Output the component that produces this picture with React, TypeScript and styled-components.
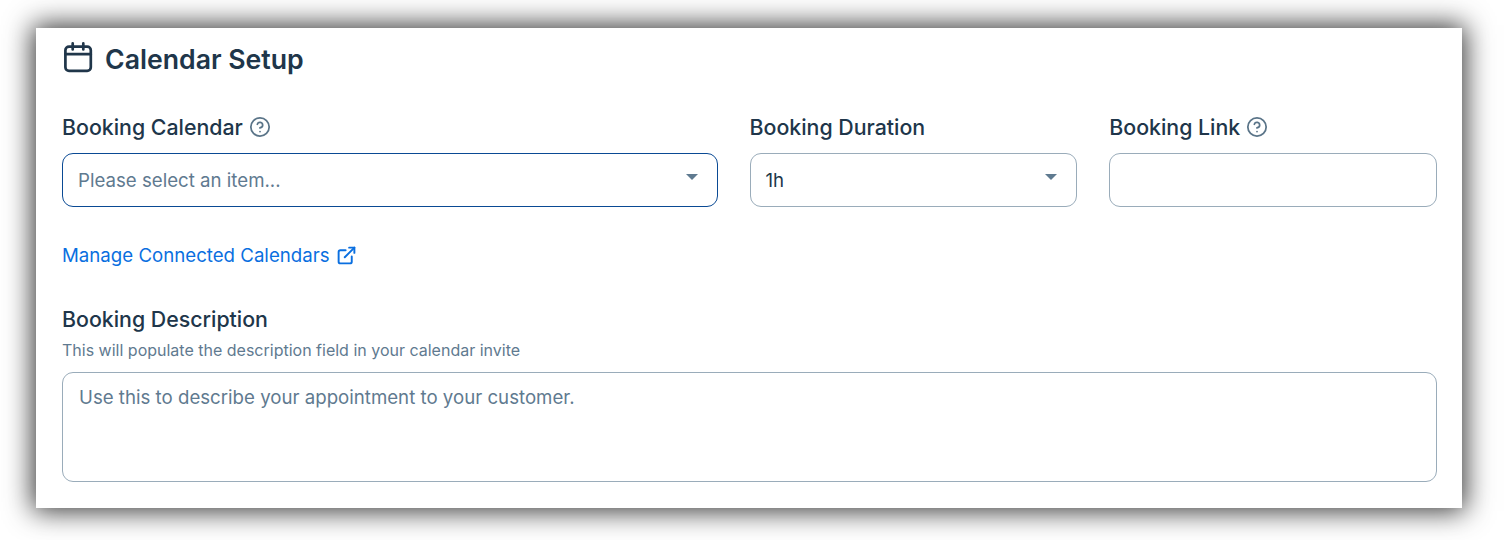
import React from "react";
import styled, { createGlobalStyle } from "styled-components";
import { CircleHelp, ExternalLink } from "lucide-react";

const GlobalStyle = createGlobalStyle`
  html, body {
    margin: 0;
    padding: 0;
    background: #fff;
    font-family: Inter, "Liberation Sans", sans-serif;
  }
`;

const Page = styled.div`
  width: 1512px;
  height: 540px;
  padding: 28px 50px 32px 36px;
  box-sizing: border-box;
  overflow: hidden;
`;

const Card = styled.section`
  height: 480px;
  box-sizing: border-box;
  padding: 13px 25px 0 26px;
  background: #fff;
  box-shadow: 0 0 26px 3px rgba(0, 0, 0, 0.8);
`;

const Header = styled.header`
  display: flex;
  align-items: center;
  gap: 11px;
  height: 38px;
  color: #20364a;
`;

const CalendarIcon = styled.svg`
  flex: none;
  width: 32px;
  height: 32px;
  margin-bottom: 4px;
`;

const Title = styled.h2`
  margin: 0 0 2px;
  font-size: 26.67px;
  line-height: 38px;
  font-weight: 600;
`;

const FieldGrid = styled.div`
  display: grid;
  grid-template-columns: 2fr 1fr 1fr;
  column-gap: 32px;
  margin-top: 35px;
`;

const Field = styled.div`
  display: flex;
  flex-direction: column;
`;

const Label = styled.label`
  display: flex;
  align-items: center;
  gap: 6px;
  height: 28px;
  margin-top: -1px;
  margin-bottom: 12px;
  font-size: 21.33px;
  line-height: 28px;
  font-weight: 500;
  color: #20364a;
`;

const HelpIcon = styled(CircleHelp)`
  color: #5a7488;
`;

const SelectBox = styled.div<{ $focused?: boolean }>`
  display: flex;
  align-items: center;
  justify-content: space-between;
  height: 54px;
  box-sizing: border-box;
  padding: 0 19px 0 15px;
  border: 1px solid ${(p) => (p.$focused ? "#0a4a94" : "#9aacba")};
  border-radius: 11px;
  font-size: 18.67px;
  color: #20364a;
`;

const Placeholder = styled.span`
  color: #5f7a90;
`;

const Caret = styled.span`
  width: 0;
  height: 0;
  margin-bottom: 6px;
  border-left: 6px solid transparent;
  border-right: 6px solid transparent;
  border-top: 6px solid #5f7a90;
`;

const TextInput = styled.input`
  height: 54px;
  width: 100%;
  box-sizing: border-box;
  padding: 0 15px;
  border: 1px solid #9aacba;
  border-radius: 11px;
  outline: none;
  font: inherit;
  font-size: 18.67px;
  background: #fff;
`;

const ManageLink = styled.a`
  display: inline-flex;
  align-items: center;
  gap: 6px;
  margin-top: 35px;
  height: 26px;
  font-size: 18.67px;
  color: #0a6fe0;
  text-decoration: none;
`;

const Description = styled.div`
  margin-top: 38px;
`;

const DescriptionLabel = styled(Label)`
  margin-bottom: 6px;
`;

const Hint = styled.div`
  font-size: 16px;
  line-height: 22px;
  color: #5f7a90;
  margin-bottom: 11px;
`;

const TextArea = styled.textarea`
  display: block;
  width: 100%;
  height: 110px;
  box-sizing: border-box;
  padding: 12px 16px;
  border: 1px solid #9aacba;
  border-radius: 11px;
  outline: none;
  resize: none;
  font: inherit;
  font-size: 18.67px;
  line-height: 26px;
  color: #20364a;
  &::placeholder {
    color: #5f7a90;
    opacity: 1;
  }
`;

export default function App() {
  return (
    <Page>
      <GlobalStyle />
      <Card>
        <Header>
          <CalendarIcon viewBox="0 0 32 32" fill="none" stroke="currentColor" strokeWidth="2.7" strokeLinecap="round">
            <rect x="3.4" y="4.6" width="25.4" height="24.2" rx="3.6" />
            <path d="M3.4 12.2h25.4M10.7 1.4v6M21.3 1.4v6" />
          </CalendarIcon>
          <Title>Calendar Setup</Title>
        </Header>
        <FieldGrid>
          <Field>
            <Label>
              Booking Calendar <HelpIcon size={22} strokeWidth={1.9} />
            </Label>
            <SelectBox $focused>
              <Placeholder>Please select an item...</Placeholder>
              <Caret />
            </SelectBox>
          </Field>
          <Field>
            <Label>Booking Duration</Label>
            <SelectBox>
              <span>1h</span>
              <Caret />
            </SelectBox>
          </Field>
          <Field>
            <Label>
              Booking Link <HelpIcon size={22} strokeWidth={1.9} />
            </Label>
            <TextInput readOnly />
          </Field>
        </FieldGrid>
        <ManageLink href="#">
          Manage Connected Calendars <ExternalLink size={21} strokeWidth={2.2} />
        </ManageLink>
        <Description>
          <DescriptionLabel>Booking Description</DescriptionLabel>
          <Hint>This will populate the description field in your calendar invite</Hint>
          <TextArea readOnly placeholder="Use this to describe your appointment to your customer." />
        </Description>
      </Card>
    </Page>
  );
}
